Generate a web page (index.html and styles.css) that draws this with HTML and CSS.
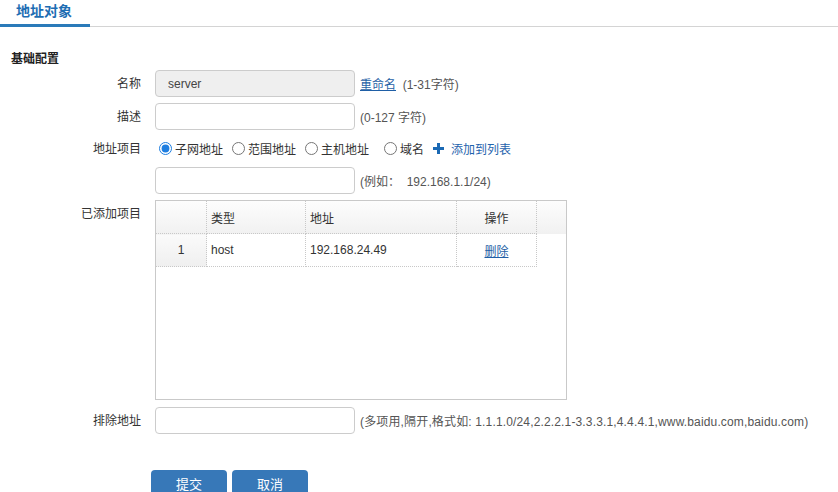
FILE: index.html
```html
<!DOCTYPE html>
<html lang="zh">

<head>
    <meta charset="UTF-8">
    <title>地址对象</title>
    <link rel="stylesheet" href="styles.css">
</head>

<body>

    <nav class="tabs">
        <a class="tab aktiv">地址对象</a>
    </nav>

    <h3 class="afsnit">基础配置</h3>

    <form class="formular">
        <div class="raekke">
            <label class="etiket">名称</label>
            <input class="felt laast" type="text" value="server" readonly>
            <span class="hint"><a class="link">重命名</a>&nbsp; (1-31字符)</span>
        </div>

        <div class="raekke">
            <label class="etiket">描述</label>
            <input class="felt" type="text">
            <span class="hint">(0-127 字符)</span>
        </div>

        <div class="raekke radio-raekke">
            <label class="etiket">地址项目</label>
            <div class="valg">
                <label><input type="radio" name="type" checked>子网地址</label>
                <label><input type="radio" name="type">范围地址</label>
                <label><input type="radio" name="type">主机地址</label>
                <label class="domaene"><input type="radio" name="type">域名</label>
                <a class="tilfoej">
                    <svg width="11" height="11" viewBox="0 0 11 11">
                        <path d="M4 0h3v4h4v3h-4v4h-3v-4h-4v-3h4z" fill="#1b69b4" />
                    </svg>
                    添加到列表
                </a>
            </div>
        </div>

        <div class="raekke">
            <label class="etiket"></label>
            <input class="felt" type="text">
            <span class="hint">(例如：&nbsp; 192.168.1.1/24)</span>
        </div>

        <div class="raekke top">
            <label class="etiket liste-etiket">已添加项目</label>
            <div class="liste">
                <table>
                    <thead>
                        <tr>
                            <th class="nr"></th>
                            <th class="type">类型</th>
                            <th class="adr">地址</th>
                            <th class="op">操作</th>
                            <th class="rest"></th>
                        </tr>
                    </thead>
                    <tbody>
                        <tr>
                            <td class="nr">1</td>
                            <td>host</td>
                            <td>192.168.24.49</td>
                            <td class="op"><a class="link">删除</a></td>
                            <td class="rest"></td>
                        </tr>
                    </tbody>
                </table>
            </div>
        </div>

        <div class="raekke">
            <label class="etiket">排除地址</label>
            <input class="felt" type="text">
            <span class="hint lang">(多项用,隔开,格式如: 1.1.1.0/24,2.2.2.1-3.3.3.1,4.4.4.1,www.baidu.com,baidu.com)</span>
        </div>

        <div class="knapper">
            <button type="button" class="knap">提交</button>
            <button type="button" class="knap">取消</button>
        </div>
    </form>

</body>

</html>
```

FILE: styles.css
```css
body {
    margin: 0;
    background-color: white;
    font-family: "Liberation Sans", "Noto Sans CJK SC", sans-serif;
    font-size: 12px;
    color: #333;
}

.tabs {
    height: 26px;
    border-bottom: 1px solid #d4d4d4;
}

.tab {
    display: block;
    width: 90px;
    height: 27px;
    padding: 2px 0 0 16px;
    box-sizing: border-box;
    border-bottom: 3px solid #2a7ab9;
    font-size: 14px;
    font-weight: bold;
    line-height: 18px;
    color: #1d6db3;
}

.afsnit {
    margin: 24px 0 0 11px;
    font-size: 12px;
    font-weight: bold;
    line-height: 16px;
    color: #222;
}

.formular {
    margin-top: 3px;
}

.raekke {
    display: flex;
    align-items: center;
    margin-bottom: 6px;
}

.raekke.top {
    align-items: flex-start;
    margin-bottom: 7px;
}

.etiket {
    width: 141px;
    margin-right: 14px;
    padding-bottom: 2px;
    text-align: right;
    color: #333;
}

.liste-etiket {
    padding-top: 4px;
}

.felt {
    width: 200px;
    height: 27px;
    box-sizing: border-box;
    margin: 0;
    padding: 0 12px;
    border: 1px solid #ccc;
    border-radius: 4px;
    font-family: inherit;
    font-size: 12px;
    color: #444;
    outline: none;
}

.felt.laast {
    background-color: #efefef;
}

.hint {
    margin-left: 5px;
    color: #555;
}

.hint.lang {
    letter-spacing: 0.15px;
}

.link {
    color: #1f5fa6;
    text-decoration: underline;
    cursor: pointer;
}

.radio-raekke {
    height: 25px;
}

.valg {
    display: flex;
    align-items: center;
}

.valg label {
    display: flex;
    align-items: center;
    margin-right: 5px;
    color: #333;
}

.valg label.domaene {
    margin-left: 6px;
}

.valg input {
    width: 13px;
    height: 13px;
    margin: 0 3px 0 4px;
    accent-color: #1e7ee0;
}

.tilfoej {
    display: flex;
    align-items: center;
    gap: 7px;
    margin-left: 4px;
    color: #1f63ad;
}

.liste {
    width: 412px;
    height: 200px;
    box-sizing: border-box;
    border: 1px solid #c9c9c9;
}

table {
    width: 100%;
    border-collapse: collapse;
    table-layout: fixed;
}

th,
td {
    height: 32px;
    padding: 0 4px;
    text-align: left;
    font-weight: normal;
    color: #333;
    border-right: 1px dotted #c8c8c8;
    border-bottom: 1px dotted #c8c8c8;
}

thead tr {
    background: linear-gradient(#fdfdfd, #f1f1f1);
}

th.nr,
td.nr {
    width: 42px;
    text-align: center;
}

td.nr {
    background: linear-gradient(#fafafa, #efefef);
}

th.type {
    width: 90px;
}

th.adr {
    width: 142px;
}

th.op,
td.op {
    width: 71px;
    text-align: center;
}

th.rest {
    border-right: none;
    border-bottom: none;
}

td.rest {
    border: none;
}

.knapper {
    display: flex;
    gap: 5px;
    margin: 36px 0 0 151px;
}

.knap {
    width: 76px;
    height: 26px;
    border: none;
    border-radius: 4px;
    background-color: #3778b8;
    color: white;
    font-family: inherit;
    font-size: 13px;
}
```
